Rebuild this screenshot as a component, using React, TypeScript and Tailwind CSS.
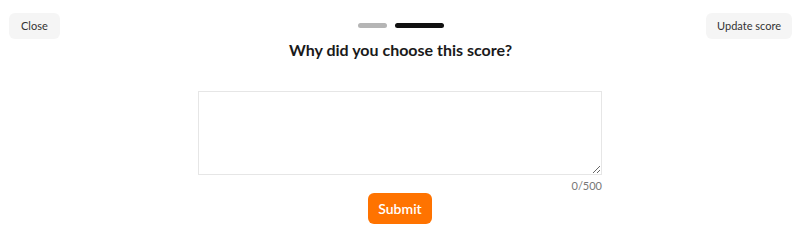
import { useState } from 'react';

export default function App() {
  const [text, setText] = useState('');

  return (
    <div className="h-[247px] w-full bg-white font-['Lato','Noto_Sans',sans-serif] text-[#222]">
      <div className="grid grid-cols-[1fr_auto_1fr] items-start pl-[9px] pr-2 pt-3">
        <div className="justify-self-start">
          <button className="h-[26px] rounded-md bg-[#f5f5f5] px-3 text-[11px] text-[#333]">Close</button>
        </div>
        <div className="flex flex-col items-center pt-[11px]">
          <div className="flex items-center gap-2">
            <div className="h-[5px] w-[29px] rounded-full bg-[#b5b5b5]" />
            <div className="h-[5px] w-[49px] rounded-full bg-[#111]" />
          </div>
          <h2 className="mt-[10px] text-[16px] font-bold leading-6 text-[#1a1a1a]">Why did you choose this score?</h2>
        </div>
        <div className="justify-self-end">
          <button className="h-[26px] rounded-md bg-[#f5f5f5] px-[11px] text-[11px] text-[#333]">Update score</button>
        </div>
      </div>

      <div className="mx-auto mt-[29px] flex w-[404px] flex-col">
        <textarea
          value={text}
          maxLength={500}
          onChange={(e) => setText(e.target.value)}
          className="h-[84px] w-full border border-[#e6e6e6] bg-white p-2 text-[13px] outline-none"
        />
        <span className="mt-[4px] self-end text-[11px] leading-[14px] text-[#777]">{text.length}/500</span>
        <button className="h-[31px] w-16 self-center rounded-md bg-[#ff7300] text-[14px] font-semibold text-white">
          Submit
        </button>
      </div>
    </div>
  );
}
